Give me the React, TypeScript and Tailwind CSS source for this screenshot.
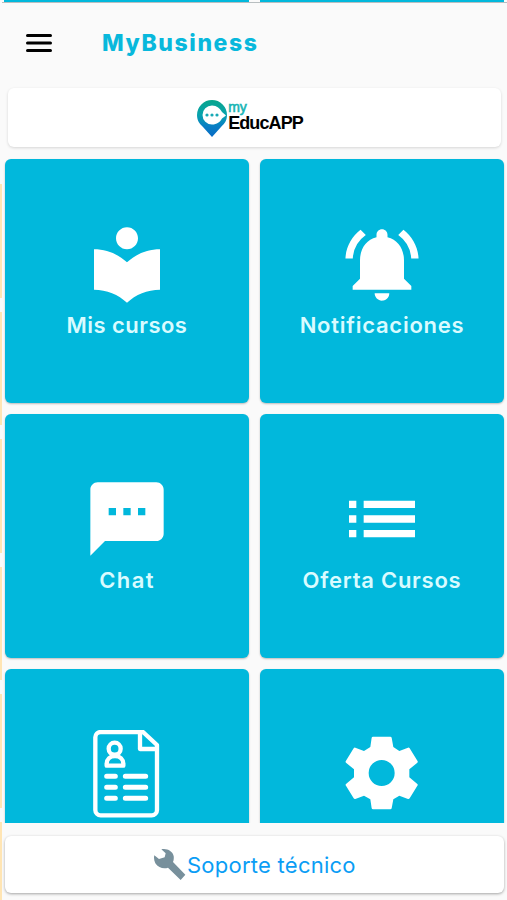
import React from 'react';
import { MdList, MdLocalLibrary, MdNotificationsActive, MdTextsms } from 'react-icons/md';

interface TileProps {
  icon: React.ReactNode;
  label: string;
  labelClass?: string;
}

const Tile: React.FC<TileProps> = ({ icon, label, labelClass = '' }) => (
  <button className="flex h-[244px] w-[244px] shrink-0 flex-col items-center rounded-md bg-[#01b8dc] pt-[61px] text-white shadow-[0_1px_2px_rgba(0,0,0,0.25)]">
    {icon}
    <span className={`mt-0.5 whitespace-nowrap text-[22px] font-semibold leading-[30px] text-[#d9fbff] ${labelClass}`}>
      {label}
    </span>
  </button>
);

const ResumeIcon: React.FC = () => (
  <svg className="h-[88px] w-[88px]" viewBox="40 61 264 264" fill="none" stroke="currentColor" strokeWidth="13" strokeLinecap="round" strokeLinejoin="round">
    <path d="M216 67H93a16 16 0 0 0-16 16v218a16 16 0 0 0 16 16h153a16 16 0 0 0 16-16V106L220 67h-9v51h50" />
    <circle cx="135" cy="117" r="18" />
    <path d="M111 168v-6c0-13 10-23 25-23s25 10 25 23v6Z" />
    <path strokeWidth="15" d="M111 200h26M111 233h26M111 266h26M167 200h61M167 233h61M167 266h61" />
  </svg>
);

const GearIcon: React.FC = () => (
  <svg className="h-[88px] w-[88px]" viewBox="24 61 264 264" fill="currentColor" fillRule="evenodd">
    <path d="M129 81h52q3 0 4 3l5 28 18 12 26-10q3-1 5 2l24 39q1 2-1 4l-24 20v24l24 20q2 2 1 4l-24 39q-2 3-5 2l-26-10-18 11-5 27q-1 3-4 3h-52q-3 0-4-3l-4-27-19-11-26 10q-3 1-5-2l-24-39q-1-2 1-4l24-20v-24l-24-20q-2-2-1-4l24-39q2-3 5-2l26 10 19-12 4-28q1-3 4-3ZM155 151a39 39 0 1 0 0 78a39 39 0 1 0 0-78Z" />
  </svg>
);

const BrandLogo: React.FC = () => (
  <div className="mr-[9px] flex items-start">
    <svg className="h-[37px] w-[30px]" viewBox="0 0 30 37">
      <defs>
        <linearGradient id="pin" x1="0" y1="0" x2="0" y2="1">
          <stop offset="0" stopColor="#08a58c" />
          <stop offset="0.4" stopColor="#08a3ad" />
          <stop offset="0.7" stopColor="#087fc4" />
          <stop offset="1" stopColor="#086bc5" />
        </linearGradient>
      </defs>
      <path fill="url(#pin)" d="M15 0a15 15 0 0 1 15 15c0 6-3 9-6 12l-9 10-9-10C3 24 0 21 0 15A15 15 0 0 1 15 0Z" />
      <path fill="#fff" d="M15 5.500c5 0 8 3.200 10 6.500l4 3.500-4 3c-2 3.500-5 6-10 6a9.500 9.500 0 0 1 0-19Z" />
      <g fill="#18a9b5">
        <circle cx="10" cy="15" r="1.600" />
        <circle cx="15" cy="15" r="1.600" />
        <circle cx="20" cy="15" r="1.600" />
      </g>
    </svg>
    <div className="ml-[1px] flex flex-col font-['Liberation_Sans',sans-serif]">
      <span className="text-[14px] leading-[15px] text-[#18b5b5] [-webkit-text-stroke:0.6px_#18b5b5]">my</span>
      <span className="text-[18px] font-bold leading-[17px] tracking-[-0.9px] text-black">EducAPP</span>
    </div>
  </div>
);

const tiles: TileProps[] = [
  { icon: <MdLocalLibrary size={88} />, label: 'Mis cursos', labelClass: 'tracking-[0.45px]' },
  { icon: <MdNotificationsActive size={88} />, label: 'Notificaciones', labelClass: 'tracking-[0.75px]' },
  { icon: <MdTextsms size={88} />, label: 'Chat', labelClass: 'tracking-[1.4px]' },
  { icon: <MdList size={88} />, label: 'Oferta Cursos', labelClass: 'tracking-[0.75px]' },
  { icon: <ResumeIcon />, label: '' },
  { icon: <GearIcon />, label: '' },
];

const App: React.FC = () => {
  return (
    <div className="flex h-[900px] w-[507px] overflow-hidden bg-[#fafafa] font-[Inter,sans-serif]">
      <div className="flex w-[2px] shrink-0 flex-col gap-[14px] pt-[184px]">
        {[0, 1, 2, 3, 4, 5].map((row) => (
          <div key={row} className="h-[113.5px] shrink-0 bg-[#ffe5b4]" />
        ))}
      </div>

      <div className="flex min-w-0 flex-1 flex-col">
        <div className="flex h-[3px] shrink-0 gap-[11px] border-b border-[#b8bec0] pl-[2px]">
          <div className="w-[245px] bg-[#01b8dc]" />
          <div className="w-[244px] bg-[#01b8dc]" />
        </div>

        <header className="flex h-[85px] shrink-0 items-center pb-[6px] pl-[24px]">
          <svg className="h-[18px] w-[26px]" viewBox="0 0 26 18" stroke="#000" strokeWidth="3" strokeLinecap="round">
            <path d="M1.500 1.500h23M1.500 9h23M1.500 16.500h23" />
          </svg>
          <h1 className="ml-[50px] text-[23px] font-extrabold leading-8 tracking-[1.6px] text-[#08b8dc]">MyBusiness</h1>
        </header>

        <div className="ml-[6px] flex h-[59px] w-[493px] shrink-0 justify-center rounded-md bg-white pt-[12px] shadow-[0_1px_3px_rgba(0,0,0,0.15)]">
          <BrandLogo />
        </div>

        <main className="grid h-[676px] shrink-0 grid-cols-[244px_244px] content-start gap-[11px] overflow-hidden pl-[3px] pt-[12px]">
          {tiles.map((tile, index) => (
            <Tile key={index} {...tile} />
          ))}
        </main>

        <button className="ml-[3px] mt-[13px] flex h-[57px] w-[499px] shrink-0 items-center rounded-md bg-white pl-[149px] shadow-[0_1px_3px_rgba(0,0,0,0.35)]">
          <svg className="mb-[2px] h-8 w-8 shrink-0" viewBox="42 84 96 96" fill="#78909c">
            <path d="M64 88C80 84 98 93 101 108c1 8 0 13-2 18l37 38-14 16-38-37c-12 5-29 1-38-13-4-8-5-17-3-24l14 11 17-5 3-12Z" />
          </svg>
          <span className="ml-[1px] whitespace-nowrap text-[22px] leading-[30px] tracking-[0.25px] text-[#0a9df5]">Soporte técnico</span>
        </button>
      </div>
    </div>
  );
};

export default App;
